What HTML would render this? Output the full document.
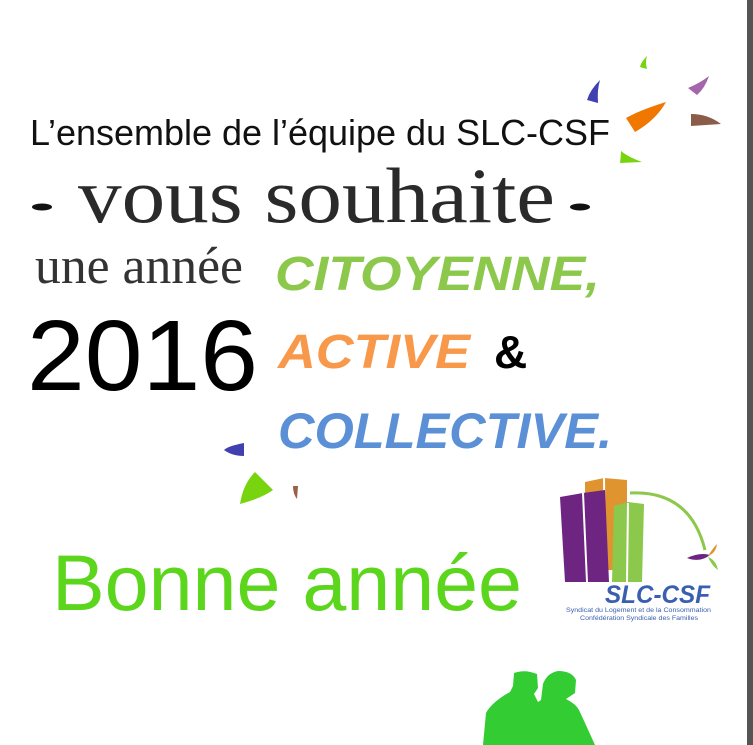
<!DOCTYPE html>
<html><head><meta charset="utf-8"><style>
html,body{margin:0;padding:0;background:#fff;width:753px;height:745px;overflow:hidden}
</style></head><body>
<svg width="753" height="745" viewBox="0 0 753 745" xmlns="http://www.w3.org/2000/svg">
<rect width="753" height="745" fill="#fff"/>
<rect x="747" y="0" width="6" height="745" fill="#555"/>
<!-- confetti -->
<path d="M600 80 Q590 90 587 100 L598 103 Q597 90 600 80Z" fill="#4040b0"/>
<path d="M647 56 Q641 62 640 67 L647 69 Q645 62 647 56Z" fill="#77d40e"/>
<path d="M709 76 Q700 83 688 88 L697 95 Q705 88 709 76Z" fill="#a565ac"/>
<path d="M666 102 Q640 110 626 118 L635 132 Q656 120 666 102Z" fill="#f07800"/>
<path d="M691 114 Q708 114 721 124 L691 126Z" fill="#8b5c48"/>
<path d="M621 151 Q628 157 642 162 L620 163 Q621 155 621 151Z" fill="#77d40e"/>
<path d="M244 443 Q228 446 224 450 Q232 456 244 456Z" fill="#4040b0"/>
<path d="M255 472 Q243 484 240 504 Q262 498 273 490Z" fill="#77d40e"/>
<path d="M293 486 Q293 494 297 499 L298 486Z" fill="#9b6048"/>
<!-- text -->
<text x="30" y="145" font-family="Liberation Sans, sans-serif" font-size="36" fill="#111" textLength="580" lengthAdjust="spacingAndGlyphs">L’ensemble de l’équipe du SLC-CSF</text>
<ellipse cx="42" cy="207" rx="10" ry="3.5" fill="#111"/>
<ellipse cx="580" cy="207" rx="10" ry="3.5" fill="#111"/>
<text x="78" y="222" font-family="Liberation Serif, serif" font-size="78" fill="#2a2a2a" textLength="477" lengthAdjust="spacingAndGlyphs">vous souhaite</text>
<text x="35" y="283" font-family="Liberation Serif, serif" font-size="52" fill="#333" textLength="208" lengthAdjust="spacingAndGlyphs">une année</text>
<text x="275" y="290" font-family="Liberation Sans, sans-serif" font-weight="bold" font-style="italic" font-size="48" fill="#8cc84b" textLength="325" lengthAdjust="spacingAndGlyphs">CITOYENNE,</text>
<text x="27" y="390" font-family="Liberation Sans, sans-serif" font-size="100" fill="#000" textLength="231" lengthAdjust="spacingAndGlyphs">2016</text>
<text x="278" y="368" font-family="Liberation Sans, sans-serif" font-weight="bold" font-style="italic" font-size="48" fill="#f7984a" textLength="192" lengthAdjust="spacingAndGlyphs">ACTIVE</text>
<text x="494" y="368" font-family="Liberation Sans, sans-serif" font-weight="bold" font-size="46" fill="#000">&amp;</text>
<text x="278" y="448" font-family="Liberation Sans, sans-serif" font-weight="bold" font-style="italic" font-size="50" fill="#5b8fd6" textLength="334" lengthAdjust="spacingAndGlyphs">COLLECTIVE.</text>
<text x="52" y="610" font-family="Liberation Sans, sans-serif" font-size="79" fill="#5cd61c" textLength="470" lengthAdjust="spacingAndGlyphs">Bonne année</text>
<!-- logo -->
<path d="M585 482 L604 478 L627 480 L627 570 L585 570Z" fill="#df9430"/>
<line x1="604" y1="478" x2="605" y2="570" stroke="#fff" stroke-width="2"/>
<path d="M560 497 L583 493 L605 490 L609 582 L565 582Z" fill="#6e2481"/>
<line x1="583" y1="493" x2="587" y2="582" stroke="#fff" stroke-width="2"/>
<path d="M614 506 L628 502 L644 504 L642 582 L612 582Z" fill="#8cc84b"/>
<line x1="628" y1="503" x2="627" y2="582" stroke="#fff" stroke-width="2"/>
<path d="M630 493 Q690 490 705 550" fill="none" stroke="#8cc84b" stroke-width="3"/>
<path d="M687 558 Q700 552 710 555 Q700 563 687 558Z" fill="#6e2481"/>
<path d="M708 556 Q713 548 717 544 Q716 553 708 556Z" fill="#df9430"/>
<path d="M708 557 Q712 566 718 570 Q716 560 708 557Z" fill="#8cc84b"/>
<text x="605" y="603" font-family="Liberation Sans, sans-serif" font-weight="bold" font-style="italic" font-size="25" fill="#3a5fb0" textLength="105" lengthAdjust="spacingAndGlyphs">SLC-CSF</text>
<text x="566" y="612" font-family="Liberation Sans, sans-serif" font-size="6.5" fill="#3a5fb0" textLength="145" lengthAdjust="spacingAndGlyphs">Syndicat du Logement et de la Consommation</text>
<text x="580" y="620" font-family="Liberation Sans, sans-serif" font-size="6.5" fill="#3a5fb0" textLength="118" lengthAdjust="spacingAndGlyphs">Confédération Syndicale des Familles</text>
<!-- silhouette -->
<path d="M483 745 L486 713 Q492 702 510 692 L513 686 L514 673 Q525 669 537 674 L538 688 L534 694 L538 702 L541 700 L543 684 Q547 673 558 671 Q572 671 576 680 L575 693 L566 699 Q576 704 579 710 Q586 725 595 745Z" fill="#33cc33"/>
</svg>
</body></html>
